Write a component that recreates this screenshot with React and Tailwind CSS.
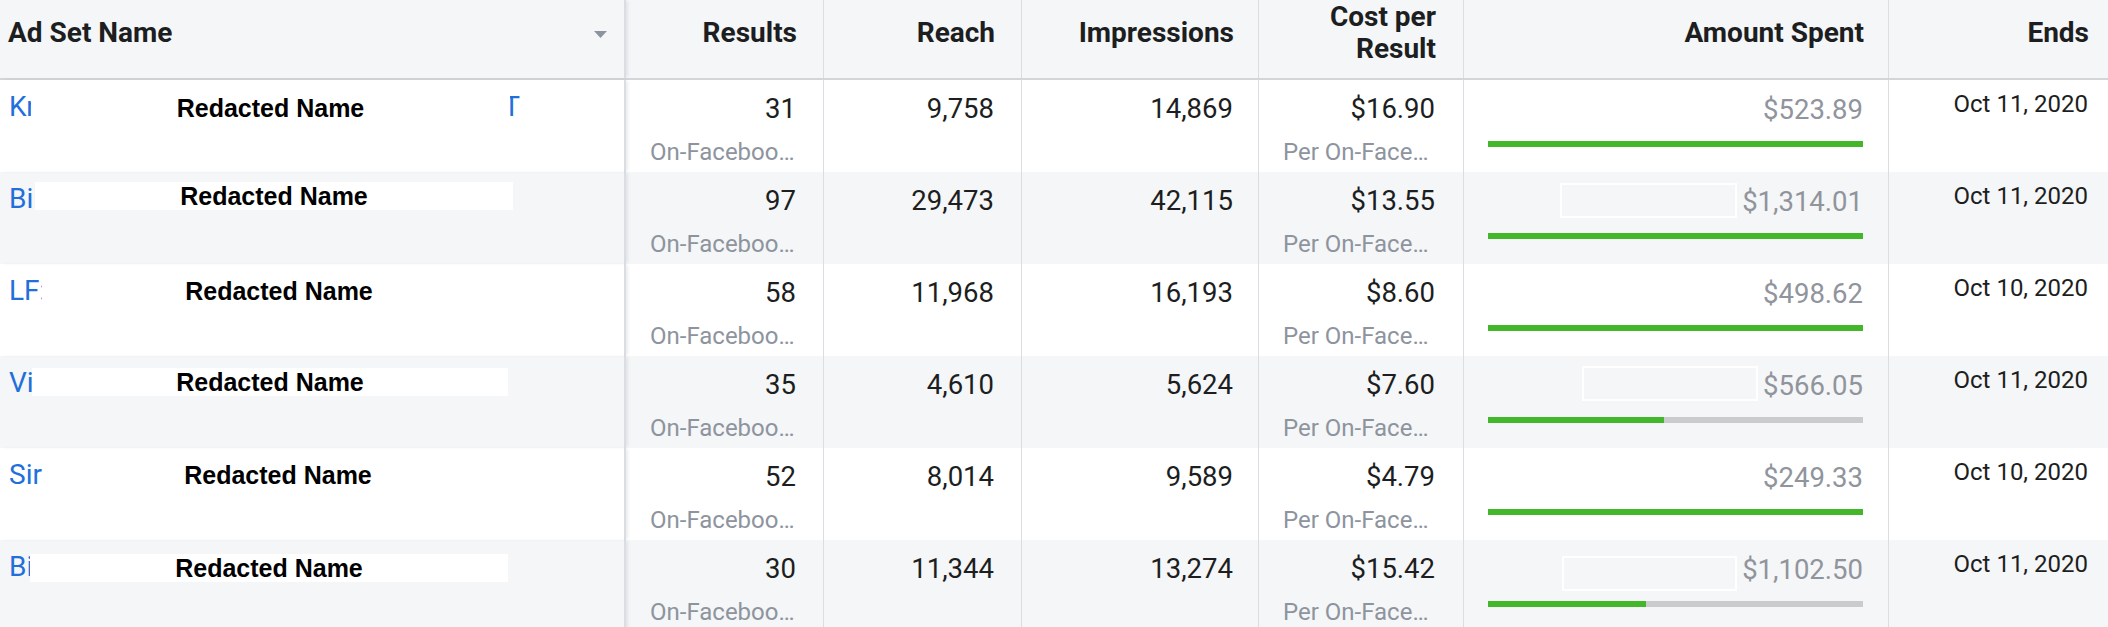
import React from "react";

const grid =
  "grid grid-cols-[626px_198px_198px_237px_205px_425px_219px]";

const rows = [
  {
    name: "Kn",
    tail: "T",
    box: { left: 31, width: 479, top: 14 },
    results: "31",
    reach: "9,758",
    impressions: "14,869",
    cost: "$16.90",
    spent: "$523.89",
    pct: 100,
    ends: "Oct 11, 2020",
  },
  {
    name: "Bil",
    box: { left: 35, width: 478, top: 10 },
    results: "97",
    reach: "29,473",
    impressions: "42,115",
    cost: "$13.55",
    spent: "$1,314.01",
    pct: 100,
    ends: "Oct 11, 2020",
    mask: { width: 177, top: 11 },
  },
  {
    name: "LF:",
    box: { left: 42, width: 474, top: 13 },
    results: "58",
    reach: "11,968",
    impressions: "16,193",
    cost: "$8.60",
    spent: "$498.62",
    pct: 100,
    ends: "Oct 10, 2020",
  },
  {
    name: "Vin",
    box: { left: 32, width: 476, top: 12 },
    results: "35",
    reach: "4,610",
    impressions: "5,624",
    cost: "$7.60",
    spent: "$566.05",
    pct: 47,
    ends: "Oct 11, 2020",
    mask: { width: 176, top: 10 },
  },
  {
    name: "Sir",
    box: { left: 44, width: 468, top: 13 },
    results: "52",
    reach: "8,014",
    impressions: "9,589",
    cost: "$4.79",
    spent: "$249.33",
    pct: 100,
    ends: "Oct 10, 2020",
  },
  {
    name: "Bil",
    box: { left: 30, width: 478, top: 14 },
    results: "30",
    reach: "11,344",
    impressions: "13,274",
    cost: "$15.42",
    spent: "$1,102.50",
    pct: 42,
    ends: "Oct 11, 2020",
    mask: { width: 175, top: 16 },
  },
];

function HeaderCell({ children, pr, border = true }) {
  return (
    <div
      className={`flex h-full items-center justify-end pb-[12px] text-right ${pr} ${
        border ? "border-r border-[#dadde1]" : ""
      }`}
    >
      <span className="text-[28px] font-bold leading-[32px] text-[#1c1e21]">
        {children}
      </span>
    </div>
  );
}

function NumberCell({ value, sub, pr }) {
  return (
    <div className={`border-r border-[#dadde1] pl-[24px] pt-[13px] ${pr}`}>
      <div className="text-right text-[27.5px] leading-[32px] text-[#1c1e21]">
        {value}
      </div>
      {sub && (
        <div className="mt-[13px] whitespace-nowrap text-[24px] leading-[28px] text-[#8d949e]">
          {sub}
        </div>
      )}
    </div>
  );
}

function AdSetRow({ row, index }) {
  const bg = index % 2 === 1 ? "bg-[#f5f6f7]" : "bg-white";
  return (
    <div className={`${grid} h-[92px] ${bg}`}>
      {/* name column with redaction overlay */}
      <div className="relative z-10 border-r-2 border-[#dadde1] pl-[9px] pt-[11px] shadow-[3px_0_3px_-1px_rgba(0,0,0,0.08)]">
        <div className="flex w-[511px] justify-between whitespace-nowrap text-[28px] leading-[32px] text-[#216fdb]">
          <span>{row.name}</span>
          {row.tail && <span>{row.tail}</span>}
        </div>
        <div
          className="absolute h-[28px] bg-white text-center font-['Liberation_Sans',Arial,sans-serif] text-[25px] font-bold leading-[28px] text-black"
          style={{ left: row.box.left, width: row.box.width, top: row.box.top }}
        >
          Redacted Name
        </div>
      </div>

      <NumberCell value={row.results} sub="On-Faceboo…" pr="pr-[27px]" />
      <NumberCell value={row.reach} pr="pr-[27px]" />
      <NumberCell value={row.impressions} pr="pr-[25px]" />
      <NumberCell value={row.cost} sub="Per On-Face…" pr="pr-[28px]" />

      <div className="border-r border-[#dadde1] pl-[24px] pr-[25px] pt-[14px]">
        <div className="flex h-[32px] items-start justify-end">
          {row.mask && (
            <div
              className="mr-[5px] h-[35px] shrink-0 border-2 border-white"
              style={{ width: row.mask.width, marginTop: row.mask.top - 14 }}
            />
          )}
          <span className="text-[27.5px] leading-[32px] text-[#90949c]">
            {row.spent}
          </span>
        </div>
        <div className="mt-[15px] h-[6px] bg-[#c9cbcd]">
          <div
            className="h-full bg-[#42b72a]"
            style={{ width: `${row.pct}%` }}
          />
        </div>
      </div>

      <div className="pr-[20px] pt-[10px] text-right text-[24px] leading-[28px] text-[#1c1e21]">
        {row.ends}
      </div>
    </div>
  );
}

export default function App() {
  return (
    <div className="h-[627px] w-[2108px] overflow-hidden bg-white font-['Roboto',Arial,sans-serif]">
      <div className={`${grid} h-[80px] border-b-2 border-[#d3d5d8] bg-[#f5f6f7]`}>
        <div className="relative z-10 flex h-full items-center justify-between border-r-2 border-[#dadde1] pb-[12px] pl-[8px] pr-[17px] shadow-[3px_0_3px_-1px_rgba(0,0,0,0.08)]">
          <span className="text-[28px] font-bold leading-[32px] text-[#1c1e21]">
            Ad Set Name
          </span>
          <svg width="13" height="7" viewBox="0 0 13 7" className="mt-[2px]">
            <polygon points="0,0 13,0 6.5,7" fill="#8d949e" />
          </svg>
        </div>
        <HeaderCell pr="pr-[26px]">Results</HeaderCell>
        <HeaderCell pr="pr-[26px]">Reach</HeaderCell>
        <HeaderCell pr="pr-[24px]">Impressions</HeaderCell>
        <HeaderCell pr="pr-[27px]">
          Cost per
          <br />
          Result
        </HeaderCell>
        <HeaderCell pr="pr-[24px]">Amount Spent</HeaderCell>
        <HeaderCell pr="pr-[19px]" border={false}>
          Ends
        </HeaderCell>
      </div>

      {rows.map((row, i) => (
        <AdSetRow key={i} row={row} index={i} />
      ))}
    </div>
  );
}
